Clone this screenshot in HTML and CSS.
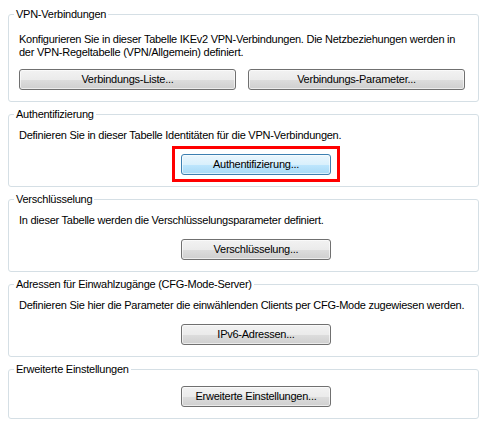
FILE: index.html
```html
<!DOCTYPE html>
<html lang="de">

<head>
    <meta charset="UTF-8">
    <meta name="viewport" content="width=device-width, initial-scale=1.0">
    <title>IKEv2/BGP</title>
    <link rel="stylesheet" href="styles.css">
</head>

<body>
    <div id="page">
        <fieldset class="group group-first">
            <legend>VPN-Verbindungen</legend>
            <p class="desc">Konfigurieren Sie in dieser Tabelle IKEv2 VPN-Verbindungen. Die Netzbeziehungen werden in der VPN-Regeltabelle (VPN/Allgemein) definiert.</p>
            <div class="btn-row btn-row-split">
                <button class="btn btn-wide">Verbindungs-Liste...</button>
                <button class="btn btn-wide">Verbindungs-Parameter...</button>
            </div>
        </fieldset>

        <fieldset class="group">
            <legend>Authentifizierung</legend>
            <p class="desc">Definieren Sie in dieser Tabelle Identitäten für die VPN-Verbindungen.</p>
            <div class="btn-row">
                <span class="highlight">
                    <button class="btn btn-hover">Authentifizierung...</button>
                </span>
            </div>
        </fieldset>

        <fieldset class="group">
            <legend>Verschlüsselung</legend>
            <p class="desc">In dieser Tabelle werden die Verschlüsselungsparameter definiert.</p>
            <div class="btn-row">
                <button class="btn">Verschlüsselung...</button>
            </div>
        </fieldset>

        <fieldset class="group">
            <legend>Adressen für Einwahlzugänge (CFG-Mode-Server)</legend>
            <p class="desc">Definieren Sie hier die Parameter die einwählenden Clients per CFG-Mode zugewiesen werden.</p>
            <div class="btn-row">
                <button class="btn">IPv6-Adressen...</button>
            </div>
        </fieldset>

        <fieldset class="group group-nodesc">
            <legend>Erweiterte Einstellungen</legend>
            <div class="btn-row">
                <button class="btn">Erweiterte Einstellungen...</button>
            </div>
        </fieldset>
    </div>
</body>

</html>
```

FILE: styles.css
```css
* {
    margin: 0;
    padding: 0;
    box-sizing: border-box;
}

body {
    background: #fff;
    color: #000;
    font-family: "Liberation Sans", Arial, sans-serif;
    font-size: 11px;
    line-height: 13px;
    letter-spacing: -0.25px;
}

#page {
    padding: 8px 8px 0;
}

.group {
    border: 1px solid #d5dfe5;
    border-radius: 3px;
    margin-bottom: 6px;
    padding: 8px 5px 11px 10px;
    min-width: 0;
}

.group legend {
    margin-left: -5px;
    padding: 0 2px;
    line-height: 13px;
}

.group-first {
    padding-top: 12px;
}

.group-nodesc {
    padding-top: 10px;
}

.desc {
    margin-bottom: 12px;
}

.group-first .desc {
    margin-bottom: 10px;
}

.btn-row {
    display: flex;
    padding-left: 162px;
}

.btn-row-split {
    padding-left: 0;
    gap: 12px;
}

.btn {
    display: block;
    width: 150px;
    height: 21px;
    border: 1px solid #707070;
    border-radius: 3px;
    background: linear-gradient(#f2f2f2 0%, #ebebeb 50%, #dddddd 51%, #cfcfcf 100%);
    box-shadow: inset 0 0 0 1px rgba(255, 255, 255, 0.6);
    font-family: inherit;
    font-size: 11px;
    line-height: 13px;
    letter-spacing: inherit;
    color: #000;
    text-align: center;
}

.btn-wide {
    width: 217px;
}

.btn-hover {
    border-color: #3c7fb1;
    background: linear-gradient(#eaf6fd 0%, #d9f0fc 50%, #bee6fd 51%, #a7d9f5 100%);
}

.highlight {
    display: block;
    border: 3px solid #ff0000;
    padding: 5px 6px 4px;
    margin: -8px -9px -7px;
}
```
